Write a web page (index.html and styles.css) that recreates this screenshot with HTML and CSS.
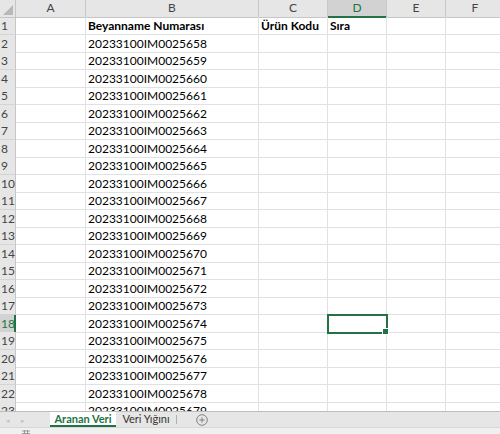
FILE: index.html
```html
<!DOCTYPE html>
<html>
<head>
<meta charset="utf-8">
<link rel="stylesheet" href="styles.css">
</head>
<body>
<div class="app">
  <div class="sheet">
    <div class="row head">
      <div class="corner"><span class="tri"></span></div>
      <div class="ch">A</div>
      <div class="ch">B</div>
      <div class="ch">C</div>
      <div class="ch active">D</div>
      <div class="ch">E</div>
      <div class="ch">F</div>
    </div>
    <div class="row"><div class="rh">1</div><div class="c"></div><div class="c b">Beyanname Numarası</div><div class="c b">Ürün Kodu</div><div class="c b">Sıra</div><div class="c"></div><div class="c"></div></div>
    <div class="row"><div class="rh">2</div><div class="c"></div><div class="c">20233100IM0025658</div><div class="c"></div><div class="c"></div><div class="c"></div><div class="c"></div></div>
    <div class="row"><div class="rh">3</div><div class="c"></div><div class="c">20233100IM0025659</div><div class="c"></div><div class="c"></div><div class="c"></div><div class="c"></div></div>
    <div class="row"><div class="rh">4</div><div class="c"></div><div class="c">20233100IM0025660</div><div class="c"></div><div class="c"></div><div class="c"></div><div class="c"></div></div>
    <div class="row"><div class="rh">5</div><div class="c"></div><div class="c">20233100IM0025661</div><div class="c"></div><div class="c"></div><div class="c"></div><div class="c"></div></div>
    <div class="row"><div class="rh">6</div><div class="c"></div><div class="c">20233100IM0025662</div><div class="c"></div><div class="c"></div><div class="c"></div><div class="c"></div></div>
    <div class="row"><div class="rh">7</div><div class="c"></div><div class="c">20233100IM0025663</div><div class="c"></div><div class="c"></div><div class="c"></div><div class="c"></div></div>
    <div class="row"><div class="rh">8</div><div class="c"></div><div class="c">20233100IM0025664</div><div class="c"></div><div class="c"></div><div class="c"></div><div class="c"></div></div>
    <div class="row"><div class="rh">9</div><div class="c"></div><div class="c">20233100IM0025665</div><div class="c"></div><div class="c"></div><div class="c"></div><div class="c"></div></div>
    <div class="row"><div class="rh">10</div><div class="c"></div><div class="c">20233100IM0025666</div><div class="c"></div><div class="c"></div><div class="c"></div><div class="c"></div></div>
    <div class="row"><div class="rh">11</div><div class="c"></div><div class="c">20233100IM0025667</div><div class="c"></div><div class="c"></div><div class="c"></div><div class="c"></div></div>
    <div class="row"><div class="rh">12</div><div class="c"></div><div class="c">20233100IM0025668</div><div class="c"></div><div class="c"></div><div class="c"></div><div class="c"></div></div>
    <div class="row"><div class="rh">13</div><div class="c"></div><div class="c">20233100IM0025669</div><div class="c"></div><div class="c"></div><div class="c"></div><div class="c"></div></div>
    <div class="row"><div class="rh">14</div><div class="c"></div><div class="c">20233100IM0025670</div><div class="c"></div><div class="c"></div><div class="c"></div><div class="c"></div></div>
    <div class="row"><div class="rh">15</div><div class="c"></div><div class="c">20233100IM0025671</div><div class="c"></div><div class="c"></div><div class="c"></div><div class="c"></div></div>
    <div class="row"><div class="rh">16</div><div class="c"></div><div class="c">20233100IM0025672</div><div class="c"></div><div class="c"></div><div class="c"></div><div class="c"></div></div>
    <div class="row"><div class="rh">17</div><div class="c"></div><div class="c">20233100IM0025673</div><div class="c"></div><div class="c"></div><div class="c"></div><div class="c"></div></div>
    <div class="row"><div class="rh active">18</div><div class="c"></div><div class="c">20233100IM0025674</div><div class="c"></div><div class="c sel"></div><div class="c"></div><div class="c"></div></div>
    <div class="row"><div class="rh">19</div><div class="c"></div><div class="c">20233100IM0025675</div><div class="c"></div><div class="c"></div><div class="c"></div><div class="c"></div></div>
    <div class="row"><div class="rh">20</div><div class="c"></div><div class="c">20233100IM0025676</div><div class="c"></div><div class="c"></div><div class="c"></div><div class="c"></div></div>
    <div class="row"><div class="rh">21</div><div class="c"></div><div class="c">20233100IM0025677</div><div class="c"></div><div class="c"></div><div class="c"></div><div class="c"></div></div>
    <div class="row"><div class="rh">22</div><div class="c"></div><div class="c">20233100IM0025678</div><div class="c"></div><div class="c"></div><div class="c"></div><div class="c"></div></div>
    <div class="row"><div class="rh">23</div><div class="c"></div><div class="c">20233100IM0025679</div><div class="c"></div><div class="c"></div><div class="c"></div><div class="c"></div></div>
  </div>
  <div class="tabbar">
    <div class="nav"><span class="arr">&#9666;</span><span class="arr">&#9656;</span></div>
    <div class="tab on">Aranan Veri</div>
    <div class="tab">Veri Yığını</div>
    <div class="sep"></div>
    <div class="add">
      <svg width="12" height="12" viewBox="0 0 12 12"><circle cx="6" cy="6" r="5.3" fill="none" stroke="#777" stroke-width="0.9"/><path d="M6 3.3v5.4M3.3 6h5.4" stroke="#777" stroke-width="0.9"/></svg>
    </div>
  </div>
  <div class="status">
    <svg class="stat-ic" width="8" height="6" viewBox="0 0 8 6"><path d="M0 1h8M0 3.5h8M2.5 0v6M5.5 0v6" stroke="#888" stroke-width="0.8"/></svg>
  </div>
</div>
</body>
</html>
```

FILE: styles.css
```css
* { box-sizing: border-box; }
html, body { margin: 0; padding: 0; background: #fff; }
body { font-family: Lato, "Liberation Sans", sans-serif; color: #000; }
.app { width: 500px; height: 434px; overflow: hidden; display: flex; flex-direction: column; }
.sheet { height: 411px; overflow: hidden; flex: none; }
.row {
  display: grid;
  grid-template-columns: 16px 70px 173px 69px 59px 59px 59px;
  height: 17.5px;
}
.row.head { height: 17px; background: #e6e6e6; }
.corner { position: relative; border-right: 1px solid #c6c6c6; border-bottom: 1px solid #c6c6c6; }
.tri {
  position: absolute; right: 2px; bottom: 2px; width: 0; height: 0;
  border-left: 10px solid transparent; border-bottom: 10px solid #b8b8b8;
}
.ch {
  font-size: 12px; color: #444; text-align: center; line-height: 16px;
  border-right: 1px solid #c9c9c9; border-bottom: 1px solid #c6c6c6;
}
.ch.active { background: #d2d2d2; color: #217346; border-bottom: 2px solid #217346; }
.rh {
  font-size: 12px; color: #444; background: #e6e6e6; line-height: 17px;
  padding-left: 1px; border-right: 1px solid #c6c6c6; border-bottom: 1px solid #d4d4d4;
  white-space: nowrap; overflow: hidden;
}
.rh.active { background: #d2d2d2; color: #217346; border-right: 2px solid #217346; }
.c {
  font-size: 12px; line-height: 17px; padding-left: 2px;
  border-right: 1px solid #e1e1e1; border-bottom: 1px solid #e1e1e1;
  white-space: nowrap; overflow: visible;
}
.c.b { font-weight: bold; }
.c.sel { position: relative; outline: 2px solid #217346; outline-offset: -1px; }
.c.sel::after {
  content: ""; position: absolute; right: -3px; bottom: -3px; width: 5px; height: 5px;
  background: #217346; border: 1px solid #fff;
}
.tabbar {
  height: 16px; flex: none; background: #e6e6e6; border-top: 1px solid #bdbdbd;
  display: flex; align-items: stretch; font-size: 11px;
}
.nav { width: 50px; display: flex; gap: 11px; padding-left: 6px; align-items: center; }
.arr { color: #c4c4c4; font-size: 7px; line-height: 14px; }
.tab { line-height: 14px; color: #333; white-space: nowrap; width: 60px; text-align: center; }
.tab.on {
  background: #fff; color: #217346; font-weight: bold; width: 66px;
  border-bottom: 2px solid #217346;
}
.sep { width: 1px; background: #b0b0b0; margin: 3px 0; }
.add { width: 50px; display: flex; align-items: center; justify-content: center; }
.status { flex: 1; background: #f0f0f0; border-top: 1px solid #d8d8d8; }
.stat-ic { display: block; margin: 2px 0 0 22px; }
```
